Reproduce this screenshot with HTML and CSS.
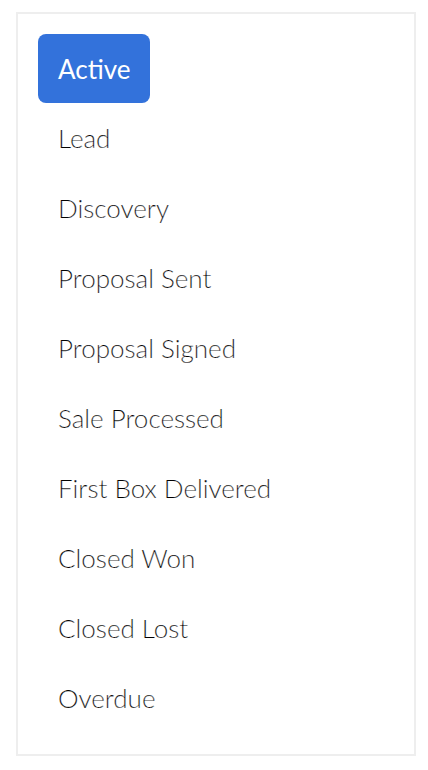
FILE: index.html
```html
<!DOCTYPE html>
<html>
<head>
<meta charset="utf-8">
<link rel="stylesheet" href="styles.css">
</head>
<body>
<div class="panel">
  <ul class="list">
    <li class="item active">Active</li>
    <li class="item">Lead</li>
    <li class="item">Discovery</li>
    <li class="item">Proposal Sent</li>
    <li class="item">Proposal Signed</li>
    <li class="item">Sale Processed</li>
    <li class="item">First Box Delivered</li>
    <li class="item">Closed Won</li>
    <li class="item">Closed Lost</li>
    <li class="item">Overdue</li>
  </ul>
</div>
</body>
</html>
```
FILE: styles.css
```css
html, body {
  margin: 0;
  padding: 0;
  background: #fff;
}
body {
  padding: 12px 12px 0 16px;
  font-family: "Lato Light", Lato, "Liberation Sans", sans-serif;
}
.panel {
  border: 2px solid #eeeeee;
  padding: 20px;
  box-sizing: border-box;
  width: 400px;
}
.list {
  list-style: none;
  margin: 0;
  padding: 0;
  display: flex;
  flex-direction: column;
}
.item {
  height: 70px;
  display: flex;
  align-items: center;
  align-self: flex-start;
  padding: 0 20px 3px;
  box-sizing: border-box;
  font-size: 26px;
  font-weight: 300;
  color: #000;
  -webkit-text-stroke: 0.2px #fff;
  border-radius: 8px;
}
.item.active {
  font-family: Lato, "Liberation Sans", sans-serif;
  background: #3372db;
  color: #fff;
  -webkit-text-stroke: 0;
  font-weight: 400;
  height: 69px;
  padding-bottom: 0;
  margin-bottom: 1px;
}
```
